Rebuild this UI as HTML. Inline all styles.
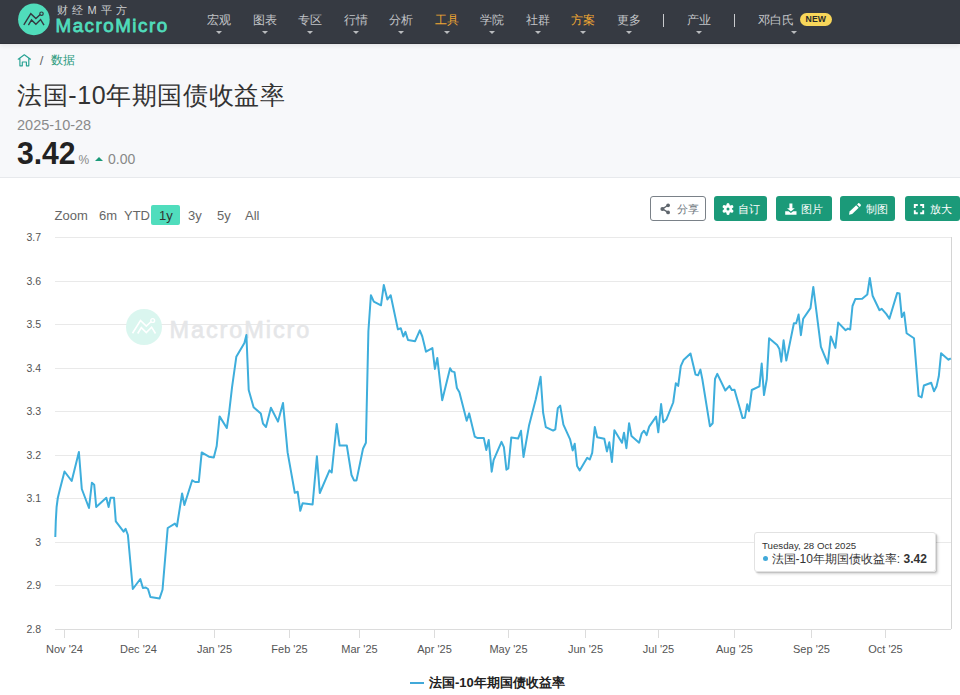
<!DOCTYPE html>
<html><head><meta charset="utf-8">
<style>
*{margin:0;padding:0;box-sizing:border-box}
html,body{width:960px;height:695px;overflow:hidden;background:#fff;font-family:"Liberation Sans",sans-serif}
.abs{position:absolute;white-space:nowrap}
#hdr{position:absolute;left:0;top:0;width:960px;height:44px;background:#363a42;border-bottom:1px solid #30333a;box-shadow:0 2px 4px rgba(0,0,0,0.07);z-index:2}
.nav{position:absolute;top:11.5px;font-size:12px;line-height:16px;color:#c3c5c8;text-align:center;width:40px}
.nav.o{color:#f0a732}
.car{position:absolute;top:31px;width:0;height:0;border-left:3px solid transparent;border-right:3px solid transparent;border-top:3px solid #b9bbbe}
#top{position:absolute;left:0;top:43px;width:960px;height:135px;background:#f7f8fa;border-bottom:1px solid #e7e9ec}
.btn{position:absolute;top:196px;height:25px;width:55px;border-radius:3px;background:#1b9a79;color:#fff;font-size:11px;line-height:25px}
.rs{position:absolute;top:207.5px;font-size:13px;line-height:16px;color:#666}
.yl{position:absolute;left:0;width:41px;text-align:right;font-size:10.5px;line-height:12px;color:#555}
.xl{position:absolute;top:643px;width:60px;text-align:center;font-size:11px;line-height:12px;color:#555}
</style></head><body>
<div id="hdr">
  <svg class="abs" style="left:17px;top:3px" width="34" height="34" viewBox="0 0 34 34">
    <circle cx="16.9" cy="16.4" r="15.8" fill="#50dcbb"/>
    <path d="M6.8 21.8 L13.8 10.7 L18.9 15.6 L23.2 11.6" fill="none" stroke="#353840" stroke-width="1.4" stroke-linejoin="miter"/>
    <path d="M11.4 22.1 L14.5 16.9 L18.9 21.3 L23.6 16.6 L27 22.1" fill="none" stroke="#353840" stroke-width="1.4"/>
    <circle cx="24.5" cy="10.7" r="1.7" fill="none" stroke="#353840" stroke-width="1.2"/>
  </svg>
  <div class="abs" style="left:57px;top:4px;font-size:11px;line-height:13px;color:#cfd1d3;letter-spacing:4.2px">财经M平方</div>
  <div class="abs" style="left:55.5px;top:14.5px;font-size:18.8px;line-height:22px;color:#50dcbb;-webkit-text-stroke:0.8px #50dcbb;letter-spacing:1.5px">MacroMicro</div>
  <div class="nav" style="left:199px">宏观</div><div class="car" style="left:216px"></div>
  <div class="nav" style="left:245px">图表</div><div class="car" style="left:262px"></div>
  <div class="nav" style="left:290px">专区</div><div class="car" style="left:307px"></div>
  <div class="nav" style="left:336px">行情</div><div class="car" style="left:353px"></div>
  <div class="nav" style="left:381px">分析</div><div class="car" style="left:398px"></div>
  <div class="nav o" style="left:427px">工具</div><div class="car" style="left:444px"></div>
  <div class="nav" style="left:472px">学院</div><div class="car" style="left:489px"></div>
  <div class="nav" style="left:518px">社群</div><div class="car" style="left:535px"></div>
  <div class="nav o" style="left:563px">方案</div><div class="car" style="left:580px"></div>
  <div class="nav" style="left:609px">更多</div><div class="car" style="left:626px"></div>
  <div class="abs" style="left:663.3px;top:14.3px;width:1.2px;height:12.4px;background:#c9cbce"></div>
  <div class="nav" style="left:679px">产业</div><div class="car" style="left:696px"></div>
  <div class="abs" style="left:734px;top:14.3px;width:1.2px;height:12.4px;background:#c9cbce"></div>
  <div class="nav" style="left:756px;width:40px">邓白氏</div><div class="car" style="left:791px"></div>
  <div class="abs" style="left:799.5px;top:12.5px;width:32.5px;height:13px;border-radius:6.5px;background:#f8d65a;color:#2a2a2a;font-size:8.7px;line-height:13.5px;font-weight:bold;text-align:center">NEW</div>
</div>
<div id="top">
  <svg class="abs" style="left:17px;top:11px" width="15" height="13" viewBox="0 0 15 13"><path d="M1.2 5.2 L7.3 0.8 L13.5 5.2 M2.9 4.2 V11.8 H5.3 V8 H9.4 V11.8 H11.8 V4.2" fill="none" stroke="#27a293" stroke-width="1.15" stroke-linejoin="round" stroke-linecap="round"/></svg>
  <div class="abs" style="left:39.8px;top:11px;font-size:13px;line-height:14px;color:#666">/</div>
  <div class="abs" style="left:51px;top:10px;font-size:12px;line-height:14px;color:#2a9a7c">数据</div>
  <div class="abs" style="left:17px;top:37px;font-size:25px;line-height:30px;color:#333;letter-spacing:0.6px;font-weight:300">法国-10年期国债收益率</div>
  <div class="abs" style="left:17px;top:74px;font-size:14.5px;line-height:16px;color:#8a8a8a">2025-10-28</div>
  <div class="abs" style="left:17px;top:93px;font-size:32px;line-height:34px;color:#222;font-weight:bold;transform:scaleX(0.94);transform-origin:0 0">3.42</div>
  <div class="abs" style="left:78.5px;top:110.5px;font-size:12px;line-height:13px;color:#888">%</div>
  <div class="abs" style="left:95.3px;top:113.5px;width:0;height:0;border-left:4.6px solid transparent;border-right:4.6px solid transparent;border-bottom:4.8px solid #1b9a79"></div>
  <div class="abs" style="left:108px;top:108px;font-size:14px;line-height:16px;color:#888">0.00</div>
</div>
<!-- range selector -->
<div class="rs" style="left:54.5px">Zoom</div>
<div class="rs" style="left:99px">6m</div>
<div class="rs" style="left:124px">YTD</div>
<div class="abs" style="left:151.3px;top:205px;width:29px;height:20px;background:#50ddbd;border-radius:2px"></div>
<div class="rs" style="left:159px;color:#333">1y</div>
<div class="rs" style="left:188px">3y</div>
<div class="rs" style="left:217px">5y</div>
<div class="rs" style="left:245px">All</div>
<!-- buttons -->
<div class="btn" style="left:650px;width:55.5px;background:#fff;border:1px solid #7a8188;color:#6c757d;line-height:23px"><span class="abs" style="left:25.5px;top:0.5px">分享</span></div>
<div class="btn" style="left:714px;width:53px"><span class="abs" style="left:23.5px;top:0.5px">自订</span></div>
<div class="btn" style="left:776px;width:55.5px"><span class="abs" style="left:25px;top:0.5px">图片</span></div>
<div class="btn" style="left:840px;width:55px"><span class="abs" style="left:25.5px;top:0.5px">制图</span></div>
<div class="btn" style="left:904.5px;width:55.3px"><span class="abs" style="left:25.5px;top:0.5px">放大</span></div>
<svg class="abs" style="left:0;top:0;z-index:3" width="960" height="695">
  <g fill="#5f666d"><circle cx="668.1" cy="205.3" r="1.9"/><circle cx="662.4" cy="208.9" r="2"/><circle cx="668.1" cy="212.4" r="1.9"/></g>
  <path d="M662.4 208.9 L668.1 205.3 M662.4 208.9 L668.1 212.4" stroke="#5f666d" stroke-width="1.3"/>
  <g stroke="#fff" stroke-width="3" stroke-linecap="round">
    <line x1="728" y1="204.4" x2="728" y2="213.4"/>
    <line x1="724.1" y1="206.65" x2="731.9" y2="211.15"/>
    <line x1="724.1" y1="211.15" x2="731.9" y2="206.65"/>
  </g>
  <circle cx="728" cy="208.9" r="3.9" fill="#fff"/>
  <circle cx="728" cy="208.9" r="1.5" fill="#1b9a79"/>
  <path d="M789.4 203.6 H792.4 V208.2 H794.8 L790.9 211.4 L787 208.2 H789.4 Z" fill="#fff"/>
  <path d="M785.2 211.3 H788.6 L790.9 213 L793.2 211.3 H796.5 V214.7 H785.2 Z" fill="#fff"/>
  <path d="M849 214.7 L849.6 211.6 L856.2 205.3 L858.7 207.8 L852.2 214.1 Z" fill="#fff"/>
  <path d="M857.1 204.4 L858.2 203.3 Q858.9 202.8 859.6 203.4 L860.7 204.5 Q861.2 205.2 860.6 205.9 L859.6 206.9 Z" fill="#fff"/>
  <path d="M914.8 208 V205 H917.8 M920.2 205 H923.2 V208 M923.2 210.2 V213.2 H920.2 M917.8 213.2 H914.8 V210.2" fill="none" stroke="#fff" stroke-width="1.9"/>
</svg>
<!-- chart -->
<svg class="abs" style="left:0;top:0" width="960" height="695">
  <g stroke="#e9e9e9" stroke-width="1">
    <line x1="55" x2="951" y1="237.5" y2="237.5"/>
    <line x1="55" x2="951" y1="281.5" y2="281.5"/>
    <line x1="55" x2="951" y1="324.5" y2="324.5"/>
    <line x1="55" x2="951" y1="368.5" y2="368.5"/>
    <line x1="55" x2="951" y1="411.5" y2="411.5"/>
    <line x1="55" x2="951" y1="455.5" y2="455.5"/>
    <line x1="55" x2="951" y1="498.5" y2="498.5"/>
    <line x1="55" x2="951" y1="542.5" y2="542.5"/>
    <line x1="55" x2="951" y1="585.5" y2="585.5"/>
  </g>
  <line x1="55" x2="951" y1="629.5" y2="629.5" stroke="#dcdcdc"/>
  <line x1="951.5" x2="951.5" y1="237" y2="629" stroke="#d4d4d4"/>
  <g stroke="#dcdcdc"><line x1="64.5" x2="64.5" y1="630" y2="638"/><line x1="138.5" x2="138.5" y1="630" y2="638"/><line x1="214.5" x2="214.5" y1="630" y2="638"/><line x1="289.5" x2="289.5" y1="630" y2="638"/><line x1="359.5" x2="359.5" y1="630" y2="638"/><line x1="434.5" x2="434.5" y1="630" y2="638"/><line x1="508.5" x2="508.5" y1="630" y2="638"/><line x1="585.5" x2="585.5" y1="630" y2="638"/><line x1="658.5" x2="658.5" y1="630" y2="638"/><line x1="734.5" x2="734.5" y1="630" y2="638"/><line x1="811.5" x2="811.5" y1="630" y2="638"/><line x1="885.5" x2="885.5" y1="630" y2="638"/></g>
  <!-- watermark -->
  <circle cx="144" cy="327" r="18" fill="#daf6ef"/>
  <path d="M132.5 333.2 L140.5 320.5 L146.3 326.1 L151.2 321.5 M137.7 333.5 L141.3 327.6 L146.3 332.6 L151.6 327.2 L155.5 333.5" fill="none" stroke="#fff" stroke-width="1.6"/>
  <circle cx="152.7" cy="320.5" r="1.9" fill="none" stroke="#fff" stroke-width="1.4"/>
  <text x="169.5" y="337.5" font-family="Liberation Sans" font-size="23.5" fill="#e5e6e8" stroke="#e5e6e8" stroke-width="0.6" letter-spacing="1.9">MacroMicro</text>
  <path d="M55.3 537 L55.8 521 L56.6 507 L57.8 498 L59.6 490.5 L64.5 471.5 L71.7 481 L78.9 452 L81.8 489 L89 508 L91.9 482.7 L94.2 484.7 L96.2 507 L106.3 497.7 L108.6 507 L110.6 497.7 L114 497.7 L115.8 521.3 L123.6 531.6 L125.6 528.8 L127.9 535 L132.8 589 L140.3 579 L142.9 588 L145.8 587.5 L148 589 L150.4 597 L159.6 598.4 L162.5 589.8 L167.7 528 L174.9 523.6 L176.9 526.5 L182.1 493.5 L184.4 505 L192.2 480.3 L195.1 482 L198.8 482 L201.7 452.4 L208.9 456.7 L213.8 457.6 L216.7 446 L219.6 416.4 L226.8 428 L229 413.5 L232 387.6 L236.3 356.8 L244.4 343 L246.4 335 L248.7 390 L253.6 407.2 L260.8 413.5 L263 423.6 L266 427 L270.9 407.8 L278 421.6 L283 402.9 L287.6 452.4 L294.8 492.7 L297.7 491.8 L300.3 510.8 L302.6 503.3 L312.6 504.5 L316.9 456.3 L319.8 493 L329.5 470.4 L331.7 472.5 L336.7 424 L339.6 445.5 L346.8 445.5 L351.5 475 L354 480.4 L356.5 480.4 L363 448.8 L365.9 442.7 L368.4 331 L370.9 295.2 L373.8 301.7 L381 305.3 L383.8 285 L387.4 299.5 L390.7 295.2 L397.9 329.4 L400.8 328.3 L403.3 336.5 L405.4 331.9 L408 340 L415.1 341.2 L419.8 330.4 L422.3 336.5 L426 351.7 L432.4 348.1 L434.9 368.9 L437.3 357.9 L442.2 400.2 L450.1 368.2 L452 371.4 L454.5 372.1 L456.9 388 L459.4 392.2 L466.7 420.8 L469.2 413.4 L474.8 436.7 L477.2 437.9 L483.8 437.9 L486.3 450.1 L488.7 439.9 L491.7 471.7 L493.6 460.2 L501.5 441.8 L503.9 447.2 L506.4 469.7 L508.3 468.5 L511.3 437.4 L518.1 438.6 L521 430.8 L523.5 457 L529.1 425.2 L535.7 399.5 L540.6 376.8 L543.1 412.5 L545.8 427.1 L553.1 430.6 L555.3 429.3 L557.8 408.1 L560.2 405.6 L563.4 424.7 L570 439.1 L572.7 450.4 L574.7 443.7 L577.1 465.9 L579.7 470.5 L587.2 457.8 L589.8 459.5 L592.2 452.8 L594.8 427 L597.2 437.3 L604.3 438.7 L606.9 451.4 L609.3 442.3 L611.9 461.9 L614.4 430.2 L622 442.7 L624 432.7 L626.4 448.2 L629.1 423.2 L631.5 436.1 L639.1 442.7 L641.6 433.7 L644 430.7 L646.6 435.1 L649.2 426.6 L656.1 416.6 L658.3 432.3 L661.1 404.1 L663.3 422.2 L666.3 419.6 L673.2 402.5 L675.8 383.3 L678.2 385.9 L680.8 366.2 L683.5 360.1 L690.5 353.5 L695.5 374.6 L698 375.3 L700.4 369.6 L702.3 379 L709.9 426.2 L712.7 423.2 L715 379 L717.3 373.9 L725.3 390.5 L729.5 385.9 L731.8 390 L734.5 389.8 L742.6 418.1 L744.9 417.7 L747.2 404.3 L749 411.2 L751.8 390 L759.4 386.4 L761.7 363.6 L764 395.1 L766.8 379 L769.1 338.2 L777.1 345.1 L779.4 349.1 L781.3 361.7 L783.6 340.3 L786.3 360.6 L793.9 323.3 L796.2 323.3 L798.6 314.5 L800.9 335.2 L803.2 318.7 L810.5 308.1 L813.3 286.9 L820.9 346.8 L827.8 363.6 L830.8 336.4 L835.4 347.9 L838.2 322.6 L845.6 330.2 L847.9 328.6 L850.2 329.5 L852.5 306 L855.3 299.1 L862.2 298.7 L867.3 294.5 L869.8 278 L872.6 295.7 L879.5 310.2 L881.8 308.8 L886.4 314.1 L889.4 318.7 L897.2 292.9 L899.5 293.4 L901.8 317.1 L904.1 312.5 L906.6 333.2 L914 338.3 L918.6 395.8 L921.6 397.4 L923.9 385.5 L931.2 382.7 L934 391.2 L936.5 386.6 L938.8 376.3 L941.1 353.2 L948.5 359.7 L950.8 358.3" fill="none" stroke="#3eaedc" stroke-width="2" stroke-linejoin="round"/>
</svg>
<div class="yl" style="top:231px">3.7</div>
<div class="yl" style="top:275px">3.6</div>
<div class="yl" style="top:318px">3.5</div>
<div class="yl" style="top:362px">3.4</div>
<div class="yl" style="top:405px">3.3</div>
<div class="yl" style="top:449px">3.2</div>
<div class="yl" style="top:492px">3.1</div>
<div class="yl" style="top:536px">3</div>
<div class="yl" style="top:579px">2.9</div>
<div class="yl" style="top:623px">2.8</div>
<div class="xl" style="left:34.5px">Nov '24</div>
<div class="xl" style="left:108.5px">Dec '24</div>
<div class="xl" style="left:184.5px">Jan '25</div>
<div class="xl" style="left:259.5px">Feb '25</div>
<div class="xl" style="left:329.5px">Mar '25</div>
<div class="xl" style="left:404.5px">Apr '25</div>
<div class="xl" style="left:478.5px">May '25</div>
<div class="xl" style="left:555.5px">Jun '25</div>
<div class="xl" style="left:628.5px">Jul '25</div>
<div class="xl" style="left:704.5px">Aug '25</div>
<div class="xl" style="left:781.5px">Sep '25</div>
<div class="xl" style="left:855.5px">Oct '25</div>
<!-- tooltip -->
<div class="abs" style="left:753.5px;top:531.5px;width:182.5px;height:40.5px;background:rgba(255,255,255,0.97);border:1px solid #e2e2e2;border-radius:3px;box-shadow:1px 1px 1px rgba(0,0,0,0.14),2px 2px 2px rgba(0,0,0,0.09),3px 3px 3px rgba(0,0,0,0.05)">
  <div class="abs" style="left:7.5px;top:7.5px;font-size:9.7px;line-height:12px;color:#333">Tuesday, 28 Oct 2025</div>
  <div class="abs" style="left:8px;top:23px;width:5px;height:5px;border-radius:50%;background:#41a9d9"></div>
  <div class="abs" style="left:17px;top:19px;font-size:12px;line-height:14px;color:#333">法国-10年期国债收益率: <b>3.42</b></div>
</div>
<!-- legend -->
<div class="abs" style="left:410px;top:682px;width:14px;height:2px;background:#41a9d9"></div>
<div class="abs" style="left:429px;top:676px;font-size:13px;line-height:14px;color:#222;font-weight:bold">法国-10年期国债收益率</div>
</body></html>
